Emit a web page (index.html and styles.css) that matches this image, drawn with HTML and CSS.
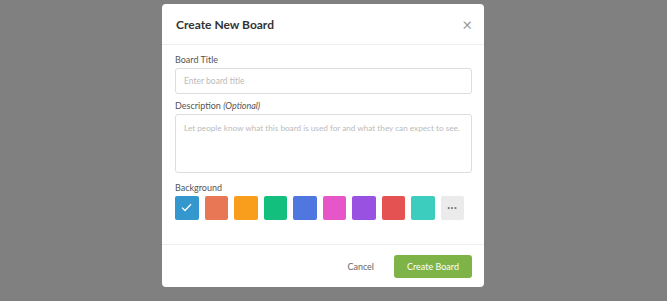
FILE: index.html
```html
<!DOCTYPE html>
<html lang="en">
<head>
  <meta charset="UTF-8">
  <title>Create New Board</title>
  <link rel="stylesheet" href="styles.css">
</head>
<body>
  <div class="modal">
    <div class="modal-header">
      <h2>Create New Board</h2>
      <span class="close">&times;</span>
    </div>

    <div class="modal-body">
      <label class="field-label">Board Title</label>
      <input type="text" class="input" placeholder="Enter board title">

      <label class="field-label">Description <em>(Optional)</em></label>
      <textarea class="input textarea" placeholder="Let people know what this board is used for and what they can expect to see."></textarea>

      <label class="field-label">Background</label>
      <div class="swatches">
        <span class="swatch blue selected">
          <svg width="11" height="9" viewBox="0 0 11 9"><path d="M1 4.6 L4 7.5 L10 1.2" fill="none" stroke="#fff" stroke-width="1.3"/></svg>
        </span>
        <span class="swatch coral"></span>
        <span class="swatch amber"></span>
        <span class="swatch green"></span>
        <span class="swatch indigo"></span>
        <span class="swatch pink"></span>
        <span class="swatch purple"></span>
        <span class="swatch red"></span>
        <span class="swatch teal"></span>
        <span class="swatch more">&bull;&bull;&bull;</span>
      </div>
    </div>

    <div class="modal-footer">
      <button class="btn-cancel">Cancel</button>
      <button class="btn-create">Create Board</button>
    </div>
  </div>
</body>
</html>
```

FILE: styles.css
```css
body { margin: 0; background: #808080; font-family: Lato, "Open Sans", sans-serif; }
.modal { width: 322px; margin: 4px 0 0 162px; background: #fff; border-radius: 4px; }
.modal-header { height: 40px; display: flex; align-items: center; justify-content: space-between; padding: 0 12px 0 14px; border-bottom: 1px solid #eee; }
.modal-header h2 { margin: 0; font-size: 12px; font-weight: 700; color: #333; }
.close { font-size: 17px; color: #999; line-height: 1; }
.modal-body { padding: 9px 12px 24px 13px; }
.field-label { display: block; font-size: 9px; line-height: 11px; color: #555; margin-bottom: 3px; }
.field-label em { color: #555; }
.input { display: block; box-sizing: border-box; width: 100%; height: 26px; padding: 0 8px; border: 1px solid #ddd; border-radius: 3px; font-family: inherit; font-size: 8.5px; color: #333; margin-bottom: 6px; }
.input::placeholder { color: #bbb; }
.textarea { height: 59px; padding: 8px 2px 8px 8px; font-size: 8.2px; resize: none; margin-bottom: 9px; }
.swatches { display: flex; gap: 6px; }
.swatch { width: 23.5px; height: 23.5px; border-radius: 2px; display: flex; align-items: center; justify-content: center; }
.blue { background: #3498cf; }
.coral { background: #e87756; }
.amber { background: #f99d1c; }
.green { background: #13bf7d; }
.indigo { background: #5077e0; }
.pink { background: #e656c8; }
.purple { background: #9951e2; }
.red { background: #e55252; }
.teal { background: #3dcdbe; }
.more { background: #ebebeb; color: #777; font-size: 5px; letter-spacing: 0.5px; }
.modal-footer { border-top: 1px solid #eee; display: flex; justify-content: flex-end; align-items: center; gap: 10px; padding: 10px 12px 9px 12px; }
.btn-cancel { background: none; border: none; font-family: inherit; font-size: 9px; color: #666; padding: 0 10px; }
.btn-create { width: 78px; height: 23px; border: none; border-radius: 3px; background: #7db347; color: #fff; font-family: inherit; font-size: 9px; }
```
